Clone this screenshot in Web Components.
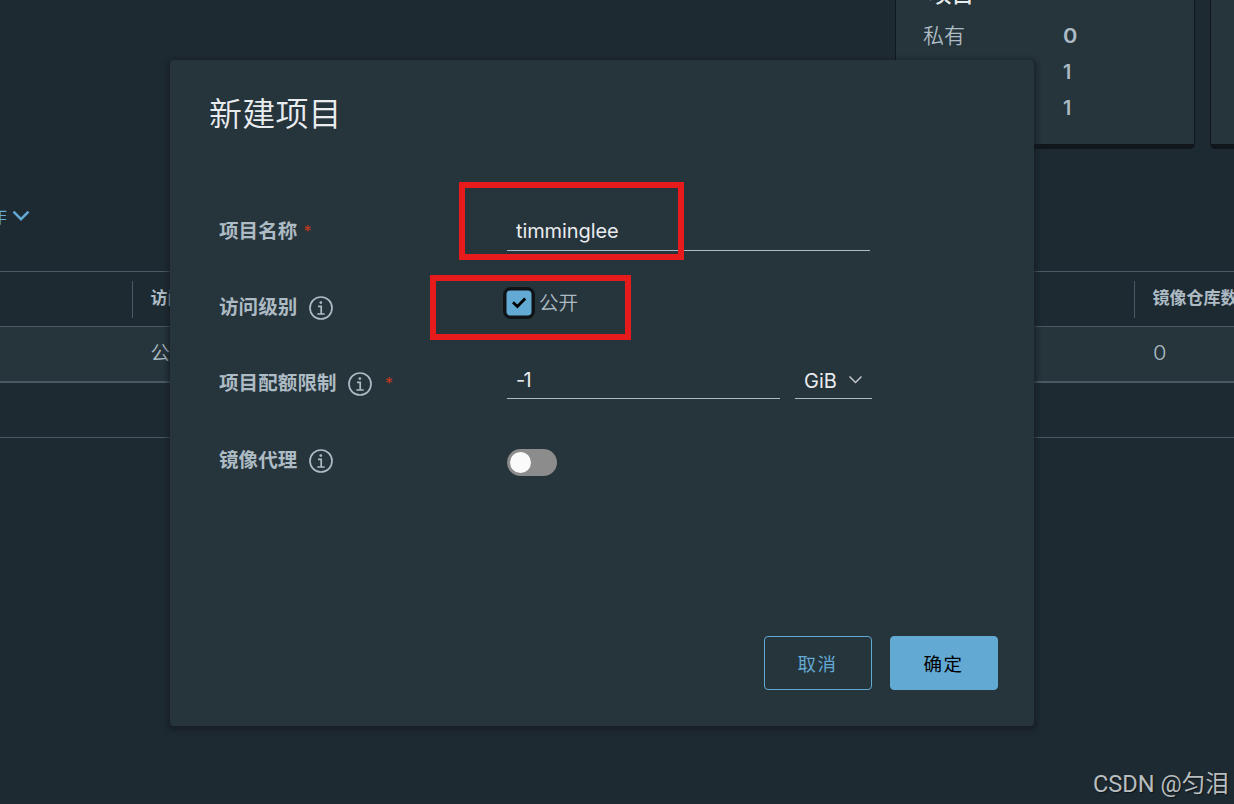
<!DOCTYPE html>
<html lang="zh-CN">
<head>
<meta charset="utf-8">
<title>新建项目</title>
<style>
html,body{margin:0;height:100%;overflow:hidden}
body{background:#1e2a31;color:#adbbc4;font-family:Inter,"Noto Sans CJK SC",sans-serif;font-size:19.5px}
</style>
</head>
<body>
<project-page></project-page>
<script>
function define(name, html){
  customElements.define(name, class extends HTMLElement{
    constructor(){
      super();
      const t=document.createElement('template');
      t.innerHTML=html;
      this.attachShadow({mode:'open'}).append(t.content.cloneNode(true));
    }
  });
}

define('info-icon',`
<style>:host{display:block;width:24px;height:24px}svg{display:block}</style>
<svg width="24" height="24" viewBox="0 0 24 24" fill="none" stroke="#adbbc4">
<circle cx="12" cy="12" r="11" stroke-width="1.7"/>
<circle cx="11.8" cy="6.6" r="1.35" fill="#adbbc4" stroke="none"/>
<path d="M9 10.4h3.2v7.3M8.3 18h7.4" stroke-width="1.7"/></svg>`);

define('form-row',`
<style>
:host{display:grid;grid-template-columns:288px 1fr;height:76px}
.label{display:flex;height:30px;align-items:center;font-weight:700;line-height:30px;letter-spacing:.1px;white-space:nowrap}
::slotted(info-icon){margin:1px 0 0 11.5px}
</style>
<div class="label"><slot name="label"></slot></div><div><slot></slot></div>`);

define('required-mark',`
<style>:host{display:block;color:#c23a20;font:400 16px/20px Inter,sans-serif}</style>*`);

define('line-input',`
<style>:host{display:block;box-sizing:border-box;width:var(--w,363px);height:40px;padding-left:9px;border-bottom:1px solid #adbbc4;color:#e9ecef;font-size:20px;line-height:var(--lh,41px);letter-spacing:var(--ls,-.1px)}</style><slot></slot>`);

define('unit-select',`
<style>:host{display:flex;align-items:center;box-sizing:border-box;width:77px;height:40px;padding:2px 9px 0;justify-content:space-between;border-bottom:1px solid #adbbc4;color:#e9ecef;font-size:20px;line-height:38px}span{padding-top:2px}svg{display:block}</style>
<span><slot></slot></span><svg width="15" height="10" viewBox="0 0 15 10" fill="none" stroke="#c3c7c9" stroke-width="1.5"><path d="M1.5 1.5 7.5 7.5 13.5 1.5"/></svg>`);

define('check-box',`
<style>
:host{display:flex;align-items:center;gap:4px;height:32px;margin-left:-4px;font-weight:350}
.box{width:26px;height:26px;border:3px solid #0f1316;border-radius:8px;background:#0f1316}
svg{display:block}
span{padding-bottom:3px}
</style>
<div class="box"><svg width="26" height="26" viewBox="0 0 26 26"><rect x=".5" y=".5" width="25" height="25" rx="4" fill="#62a9d3"/><path d="m7 12.3 4.4 4.2L19.2 8.5" fill="none" stroke="#000" stroke-width="2.8"/></svg></div>
<span><slot></slot></span>`);

define('toggle-switch',`
<style>:host{display:flex;align-items:center;box-sizing:border-box;width:50px;height:27px;padding-left:3px;border-radius:14px;background:#8c8c8c}i{width:21px;height:21px;border-radius:50%;background:#fafafa}</style><i></i>`);

define('action-button',`
<style>
:host{display:block;box-sizing:border-box;width:108px;height:54px;border:1px solid #62a9d3;border-radius:4px;text-align:center;font-size:18.5px;line-height:54px;letter-spacing:1.5px;padding-right:1px;color:#62a9d3}
:host([primary]){background:#62a9d3;color:#000}
</style><slot></slot>`);

define('modal-dialog',`
<style>
:host{display:flex;flex-direction:column;box-sizing:border-box;width:864px;height:666px;padding:34px 36px 36px 39px;border-radius:4px;background:#26343b;box-shadow:0 2px 4px 3px rgba(20,28,33,.62)}
h1{margin:0;color:#e9ecef;font-size:33px;line-height:40px;font-weight:350;letter-spacing:.2px}
.body{flex:1;padding:82px 0 0 10px}
footer{display:flex;justify-content:flex-end;gap:18px}
</style>
<h1><slot name="title"></slot></h1><div class="body"><slot></slot></div><footer><slot name="footer"></slot></footer>`);

define('stat-card',`
<style>
:host{display:block;box-sizing:border-box;height:149px;border:1px solid #11181d;border-bottom:5px solid #11161c;border-top:0;border-radius:0 0 5px 5px;background:#26343b;overflow:hidden}
</style><slot></slot>`);

define('stat-line',`
<style>:host{display:grid;grid-template-columns:140px 1fr;height:36px;line-height:36px;font-size:21px;font-weight:350}b{font-size:19.5px;font-weight:600}</style>
<span><slot></slot></span><b><slot name="value"></slot></b>`);

define('table-row',`
<style>
:host{display:grid;grid-template-columns:132px 1002px 1fr;align-items:center;box-sizing:border-box;height:var(--h,55px);border-bottom:var(--b,1px) solid #4a5964;white-space:nowrap;overflow:hidden;line-height:30px}
:host([head]){border-top:1px solid #4a5964;font-weight:700;font-size:17px}
:host([shade]){background:#26343b}
.cell{box-sizing:border-box;height:37px;line-height:35px;padding-left:18.5px}
:host([head]) .cell{border-left:1px solid #4a5964;padding-left:17.5px}
</style>
<span></span><span class="cell"><slot name="access"></slot></span><span class="cell"><slot name="count"></slot></span>`);

define('red-frame',`<style>:host{position:absolute;box-sizing:border-box;border:6px solid #e71b1c}</style>`);

define('project-page',`
<style>
:host{display:block;position:relative;width:1234px;height:804px;overflow:hidden;background:#1e2a31}
.cards{display:grid;grid-template-columns:300px 300px;gap:15px;padding-left:895px;height:149px}
.cardtitle{display:flow-root;height:18px;margin-left:33px}
.cardtitle span{display:block;margin-top:-21px;font-size:22.5px;line-height:30px;font-weight:500;color:#e9ecef}
.lines{padding-left:27px}
.tools{display:flex;align-items:center;height:122px;box-sizing:border-box;padding-top:12px;color:#62a9d3;font-weight:350}
.tools span{width:7px;display:flex;justify-content:flex-end;overflow:hidden;font-size:18px;padding-bottom:2px}
.tools svg{margin-left:5px}
modal-dialog{position:absolute;left:170px;top:60px}
.quota{display:flex;gap:15px}
.mark{position:absolute;left:1093px;top:766px;font:400 23.6px/36px Roboto,"Noto Sans CJK SC",sans-serif;color:#b9bdbf;white-space:nowrap;text-shadow:1px 1px 1px #0d1418}
.wide{display:inline-block;transform:scaleX(1.12);transform-origin:left}
</style>
<div class="cards">
 <stat-card><div class="cardtitle"><span>项目</span></div><div class="lines">
 <stat-line>私有<span slot="value" class="wide">0</span></stat-line>
 <stat-line><span slot="value">1</span></stat-line><stat-line><span slot="value">1</span></stat-line></div></stat-card>
 <stat-card></stat-card>
</div>
<div class="tools"><span>作</span><svg width="18" height="12" viewBox="0 0 18 12" fill="none" stroke="#62a9d3" stroke-width="2.5"><path d="M1.5 1.7 9 9.2 16.5 1.7"/></svg></div>
<table-row head style="--h:56px"><span slot="access">访问级别</span><span slot="count">镜像仓库数</span></table-row>
<table-row shade style="--h:56px;--b:2px"><span slot="access" style="font-weight:350">公开</span><span slot="count" class="wide" style="font-weight:300">0</span></table-row>
<table-row></table-row>
<modal-dialog>
 <span slot="title">新建项目</span>
 <form-row><span slot="label">项目名称</span><required-mark slot="label" style="margin-left:6px"></required-mark><line-input style="margin-top:-5px">timminglee</line-input></form-row>
 <form-row><span slot="label">访问级别</span><info-icon slot="label"></info-icon><check-box style="margin-top:-5px">公开</check-box></form-row>
 <form-row style="height:77px"><span slot="label">项目配额限制</span><info-icon slot="label"></info-icon><required-mark slot="label" style="margin-left:13px"></required-mark><div class="quota" style="margin-top:-9px"><line-input style="--w:273px;--lh:43px;--ls:-1.8px">-1</line-input><unit-select>GiB</unit-select></div></form-row>
 <form-row><span slot="label">镜像代理</span><info-icon slot="label"></info-icon><toggle-switch style="margin-top:4px"></toggle-switch></form-row>
 <action-button slot="footer">取消</action-button><action-button slot="footer" primary>确定</action-button>
</modal-dialog>
<red-frame style="left:459px;top:182px;width:225px;height:78px"></red-frame>
<red-frame style="left:430px;top:275px;width:201px;height:65px"></red-frame>
<div class="mark">CSDN @匀泪</div>`);
</script>
</body>
</html>
